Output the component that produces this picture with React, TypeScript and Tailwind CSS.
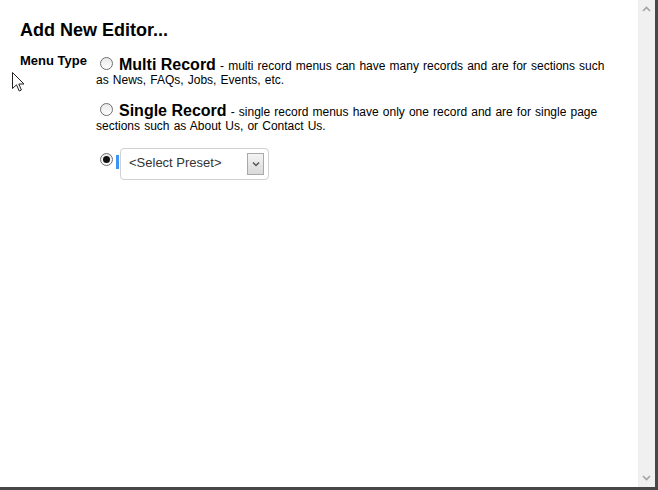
import React from "react";

function Radio({ checked = false }: { checked?: boolean }) {
  return (
    <span className="inline-flex items-center justify-center w-[13px] h-[13px] rounded-full border border-[#6f6f6f] bg-gradient-to-b from-[#e8e8e8] to-white align-baseline">
      {checked && <span className="w-[7px] h-[7px] rounded-full bg-[#111]" />}
    </span>
  );
}

function Cursor() {
  return (
    <svg className="absolute left-[12px] top-[72px]" width="13" height="20" viewBox="0 0 13 20">
      <path
        d="M0.5 0.5 L0.5 16.5 L4.5 12.8 L7.2 19 L9.4 18 L6.8 12 L12 12 Z"
        fill="#fff"
        stroke="#222"
        strokeWidth="1"
        strokeLinejoin="miter"
      />
    </svg>
  );
}

export default function App() {
  return (
    <div className="w-[658px] h-[490px] flex flex-col bg-white font-['Liberation_Sans',Arial,sans-serif] text-black border-r-[3px] border-b-[3px] border-[#474747] overflow-hidden">
      <div className="flex flex-1 min-h-0">
        {/* main pane */}
        <div className="relative flex-1">
          <Cursor />
          <h1 className="mt-[20px] ml-[20px] text-[18px] leading-[21px] font-bold">Add New Editor...</h1>

          <div className="flex mt-[12px]">
            <div className="w-[76px] ml-[20px] text-[13px] leading-[15px] font-bold shrink-0">Menu Type</div>

            <div className="w-[514px] text-[12px] leading-[14px]">
              <div className="mt-[4px] [word-spacing:0.8px]">
                <span className="ml-[4px] mr-[6px]"><Radio /></span>
                <span className="text-[16px] font-bold [word-spacing:0]">Multi Record</span> - multi record menus can have many records and are for sections such as News, FAQs, Jobs, Events, etc.
              </div>

              <div className="mt-[16px] [word-spacing:0.8px]">
                <span className="ml-[4px] mr-[6px]"><Radio /></span>
                <span className="text-[16px] font-bold [word-spacing:0]">Single Record</span> - single record menus have only one record and are for single page sections such as About Us, or Contact Us.
              </div>

              <div className="flex items-start mt-[15px]">
                <span className="ml-[4px] mt-[5px] flex"><Radio checked /></span>
                <span className="ml-[3px] mt-[7px] w-[3px] h-[14px] bg-[#3b94f5]" />
                <div className="ml-[1px] w-[149px] h-[32px] rounded-[4px] border border-[#d0d0d0] bg-white flex items-center pl-[8px] pr-[4px]">
                  <span className="flex-1 text-[13px] text-[#333] -mt-[2px]">&lt;Select Preset&gt;</span>
                  <span className="w-[17px] h-[22px] border border-[#a9a9a9] bg-gradient-to-b from-[#f4f4f4] to-[#d9d9d9] flex items-center justify-center">
                    <svg width="8" height="6" viewBox="0 0 8 6">
                      <path d="M1 1.5 L4 4.5 L7 1.5" fill="none" stroke="#555" strokeWidth="1.5" />
                    </svg>
                  </span>
                </div>
              </div>
            </div>
          </div>
        </div>

        {/* scrollbar */}
        <div className="w-[17px] shrink-0 bg-[#f0f0f0] flex flex-col items-center justify-between py-[6px]">
          <svg width="9" height="6" viewBox="0 0 9 6">
            <path d="M1 5 L4.5 1.5 L8 5" fill="none" stroke="#a3a3a3" strokeWidth="1.6" />
          </svg>
          <svg width="9" height="6" viewBox="0 0 9 6">
            <path d="M1 1 L4.5 4.5 L8 1" fill="none" stroke="#a3a3a3" strokeWidth="1.6" />
          </svg>
        </div>
      </div>
    </div>
  );
}
